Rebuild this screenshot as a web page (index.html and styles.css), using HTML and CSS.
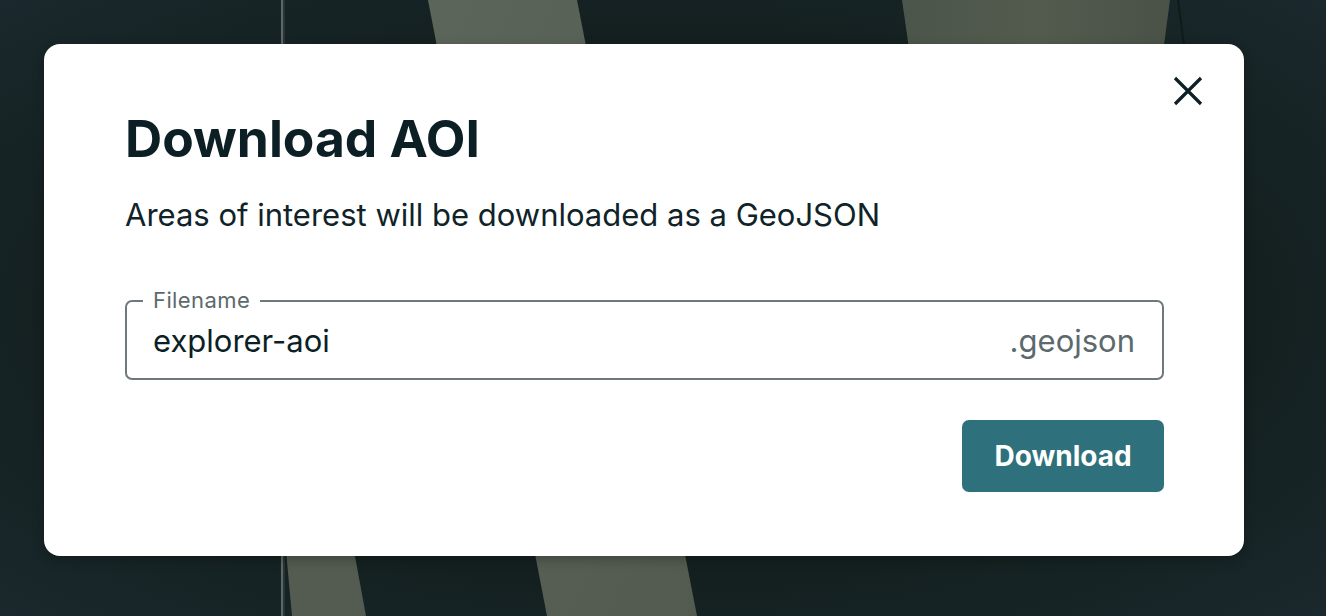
FILE: index.html
```html
<!DOCTYPE html>
<html lang="en">
<head>
<meta charset="utf-8">
<title>Download AOI</title>
<link rel="stylesheet" href="styles.css">
</head>
<body>
<div class="backdrop">
  <svg class="map" width="1326" height="616" viewBox="0 0 1326 616" xmlns="http://www.w3.org/2000/svg">
    <defs>
      <radialGradient id="vig" cx="0.5" cy="0.5" r="0.75">
        <stop offset="0" stop-color="#121d1d"/>
        <stop offset="0.6" stop-color="#142020"/>
        <stop offset="1" stop-color="#1b2a2f"/>
      </radialGradient>
      <linearGradient id="stA" x1="0" y1="0" x2="1" y2="1">
        <stop offset="0" stop-color="#5c6559"/>
        <stop offset="1" stop-color="#535b50"/>
      </linearGradient>
      <linearGradient id="stC" x1="0" y1="0" x2="1" y2="0">
        <stop offset="0" stop-color="#4c5549"/>
        <stop offset="0.5" stop-color="#535b4f"/>
        <stop offset="1" stop-color="#4a5247"/>
      </linearGradient>
    </defs>
    <rect width="1326" height="616" fill="url(#vig)"/>
    <polygon points="428,0 577,0 697,616 547,616" fill="url(#stA)"/>
    <polygon points="285,540 352,540 366,616 292,616" fill="#545c51"/>
    <polygon points="902,0 1170,0 1158,90 915,90" fill="url(#stC)"/>
    <line x1="1178" y1="0" x2="1186" y2="60" stroke="#101a19" stroke-width="2"/>
    <rect x="281" y="0" width="2" height="616" fill="#5d6866"/>
    <rect x="283" y="0" width="2" height="616" fill="#2a3434"/>
  </svg>
  <div class="modal">
    <button class="close" aria-label="Close">
      <svg width="30" height="30" viewBox="0 0 30 30" xmlns="http://www.w3.org/2000/svg">
        <path d="M2 2 L28 28 M28 2 L2 28" stroke="#0b1f24" stroke-width="3.2" stroke-linecap="butt" fill="none"/>
      </svg>
    </button>
    <h1 class="title">Download AOI</h1>
    <p class="subtitle">Areas of interest will be downloaded as a GeoJSON</p>
    <div class="field">
      <span class="legend">Filename</span>
      <span class="value">explorer-aoi</span>
      <span class="ext">.geojson</span>
    </div>
    <div class="actions">
      <button class="download">Download</button>
    </div>
  </div>
</div>
</body>
</html>
```

FILE: styles.css
```css
html, body {
  margin: 0;
  padding: 0;
  width: 1326px;
  height: 616px;
  overflow: hidden;
  background: #142020;
  font-family: Inter, "Noto Sans", sans-serif;
}

.backdrop {
  position: relative;
  width: 1326px;
  height: 616px;
  padding: 44px;
  box-sizing: border-box;
}

.map {
  position: absolute;
  left: 0;
  top: 0;
}

.modal {
  position: relative;
  width: 1200px;
  height: 512px;
  box-sizing: border-box;
  background: #ffffff;
  border-radius: 16px;
  padding: 64px 80px 0 81px;
  display: flex;
  flex-direction: column;
  box-shadow: 0 4px 12px rgba(0, 0, 0, 0.25);
}

.close {
  position: absolute;
  right: 41px;
  top: 32px;
  width: 30px;
  height: 30px;
  padding: 0;
  border: 0;
  background: none;
  display: flex;
}

.title {
  margin: 0;
  font-size: 51.5px;
  line-height: 60px;
  font-weight: 700;
  color: #0b1f24;
}

.subtitle {
  margin: 29px 0 0;
  font-size: 31px;
  line-height: 36px;
  color: #0f2328;
}

.field {
  margin-top: 67px;
  height: 80px;
  box-sizing: border-box;
  border: 2px solid #6d797b;
  border-radius: 7px;
  padding: 0 27px 0 26px;
  display: flex;
  align-items: center;
  justify-content: space-between;
  position: relative;
}

.legend {
  position: absolute;
  top: -13px;
  left: 16px;
  padding: 0 10px;
  font-size: 22px;
  line-height: 22px;
  letter-spacing: 0.4px;
  color: #5c6a6d;
  background: #ffffff;
}

.value {
  font-size: 31px;
  color: #0b1f24;
}

.ext {
  font-size: 31px;
  color: #5c6a6d;
}

.actions {
  display: flex;
  justify-content: flex-end;
  margin-top: 40px;
}

.download {
  width: 202px;
  height: 72px;
  border: 0;
  border-radius: 7px;
  background: #2e707b;
  color: #ffffff;
  font-family: Inter, "Noto Sans", sans-serif;
  font-size: 28px;
  font-weight: 700;
  padding: 0;
}
```
